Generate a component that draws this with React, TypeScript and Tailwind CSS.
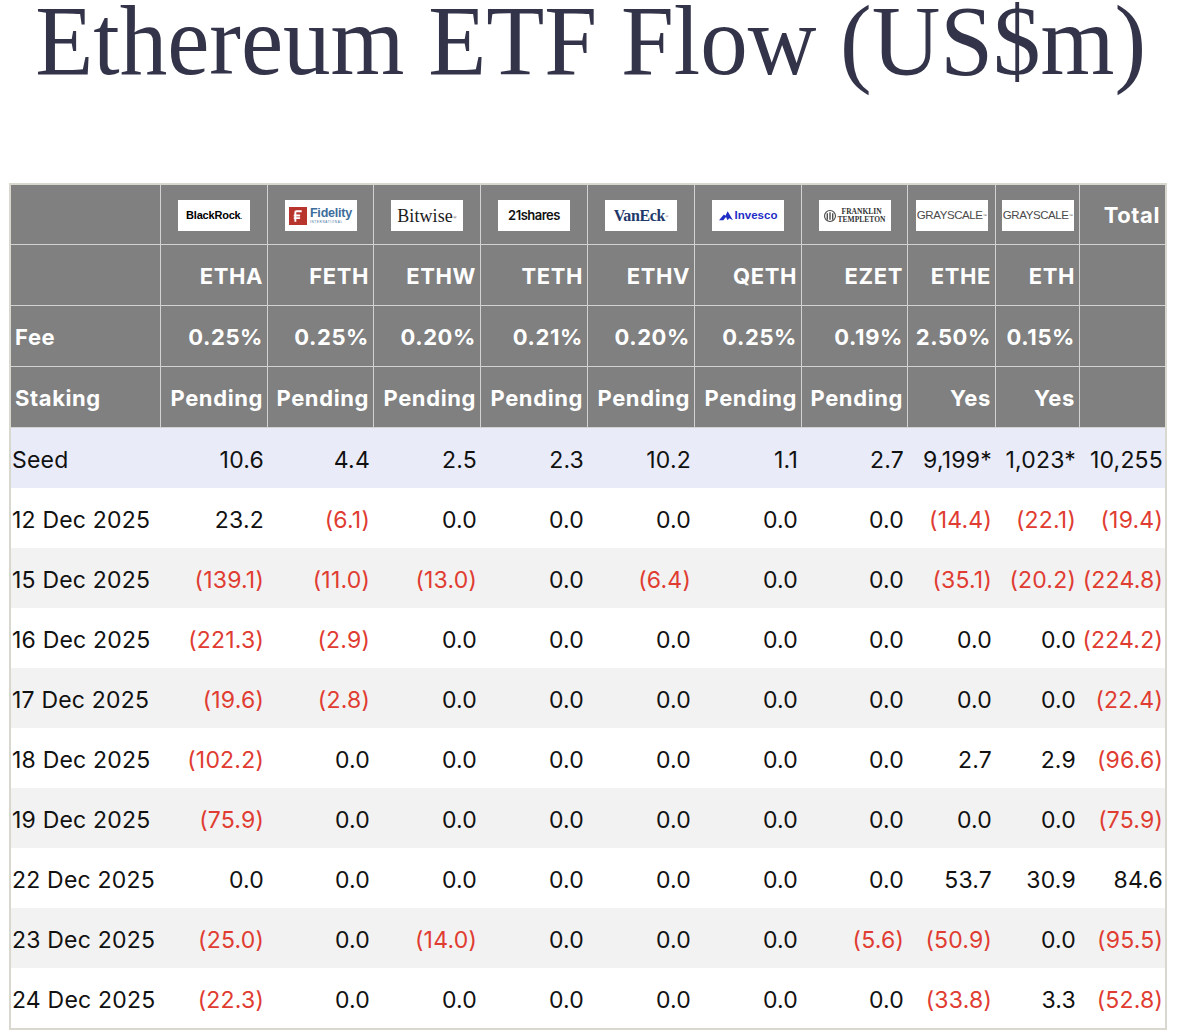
import React from 'react';

const COLS = [150, 107, 106, 107, 107, 107, 107, 106, 88, 84, 85];

const tickers = ['ETHA', 'FETH', 'ETHW', 'TETH', 'ETHV', 'QETH', 'EZET', 'ETHE', 'ETH'];
const fees = ['0.25%', '0.25%', '0.20%', '0.21%', '0.20%', '0.25%', '0.19%', '2.50%', '0.15%'];
const staking = ['Pending', 'Pending', 'Pending', 'Pending', 'Pending', 'Pending', 'Pending', 'Yes', 'Yes'];

const rows: { label: string; values: string[] }[] = [
  { label: 'Seed', values: ['10.6', '4.4', '2.5', '2.3', '10.2', '1.1', '2.7', '9,199*', '1,023*', '10,255'] },
  { label: '12 Dec 2025', values: ['23.2', '(6.1)', '0.0', '0.0', '0.0', '0.0', '0.0', '(14.4)', '(22.1)', '(19.4)'] },
  { label: '15 Dec 2025', values: ['(139.1)', '(11.0)', '(13.0)', '0.0', '(6.4)', '0.0', '0.0', '(35.1)', '(20.2)', '(224.8)'] },
  { label: '16 Dec 2025', values: ['(221.3)', '(2.9)', '0.0', '0.0', '0.0', '0.0', '0.0', '0.0', '0.0', '(224.2)'] },
  { label: '17 Dec 2025', values: ['(19.6)', '(2.8)', '0.0', '0.0', '0.0', '0.0', '0.0', '0.0', '0.0', '(22.4)'] },
  { label: '18 Dec 2025', values: ['(102.2)', '0.0', '0.0', '0.0', '0.0', '0.0', '0.0', '2.7', '2.9', '(96.6)'] },
  { label: '19 Dec 2025', values: ['(75.9)', '0.0', '0.0', '0.0', '0.0', '0.0', '0.0', '0.0', '0.0', '(75.9)'] },
  { label: '22 Dec 2025', values: ['0.0', '0.0', '0.0', '0.0', '0.0', '0.0', '0.0', '53.7', '30.9', '84.6'] },
  { label: '23 Dec 2025', values: ['(25.0)', '0.0', '(14.0)', '0.0', '0.0', '0.0', '(5.6)', '(50.9)', '0.0', '(95.5)'] },
  { label: '24 Dec 2025', values: ['(22.3)', '0.0', '0.0', '0.0', '0.0', '0.0', '0.0', '(33.8)', '3.3', '(52.8)'] },
];

function LogoBox({ children }: { children: React.ReactNode }) {
  return (
    <div className="w-[72px] h-[31px] bg-white flex items-center justify-center overflow-hidden font-normal tracking-normal leading-none">
      {children}
    </div>
  );
}

function BlackRockLogo() {
  return (
    <LogoBox>
      <span className="text-[11px] font-bold tracking-[-0.2px] text-black font-['Liberation_Sans',sans-serif]">
        BlackRock<span className="text-[6px]">.</span>
      </span>
    </LogoBox>
  );
}

function FidelityLogo() {
  return (
    <LogoBox>
      <div className="flex items-center gap-[3px]">
        <svg width="18" height="18" viewBox="0 0 17 17">
          <rect width="17" height="17" fill="#b8352d" />
          <path d="M6 4h6M6 4v10M4.5 8h6M4.5 10.5h6" stroke="#fff" strokeWidth="1.8" fill="none" />
        </svg>
        <div className="flex flex-col leading-none">
          <span className="text-[12.5px] font-bold text-[#3d6d9c] font-['Liberation_Sans',sans-serif] tracking-[-0.2px]">Fidelity</span>
          <span className="text-[3px] text-[#3d6d9c] tracking-[0.7px] mt-[2px] font-['Liberation_Sans',sans-serif]">INTERNATIONAL</span>
        </div>
      </div>
    </LogoBox>
  );
}

function BitwiseLogo() {
  return (
    <LogoBox>
      <span className="text-[18px] text-[#1b1b1b] font-['Liberation_Serif',serif] tracking-[0.1px]">
        Bitwise<sup className="text-[5px]">®</sup>
      </span>
    </LogoBox>
  );
}

function SharesLogo() {
  return (
    <LogoBox>
      <span className="text-[13px] font-semibold text-[#111] font-['Inter',sans-serif] tracking-[-0.5px]">21shares</span>
    </LogoBox>
  );
}

function VanEckLogo() {
  return (
    <LogoBox>
      <span className="text-[16px] font-bold text-[#22386a] font-['Liberation_Serif',serif] tracking-[-0.4px]">
        VanEck<sup className="text-[5px] text-[#888]">®</sup>
      </span>
    </LogoBox>
  );
}

function InvescoLogo() {
  return (
    <LogoBox>
      <div className="flex items-center gap-[2px]">
        <svg width="14" height="11" viewBox="0 0 13 10">
          <path d="M0 9.5 L4.5 4 L6 5.2 L8 1 L13 9.5 L9.5 7.5 L8 9.5 L6.5 6.5 L4 9.5 Z" fill="#1f2fc6" />
        </svg>
        <span className="text-[11.5px] font-bold text-[#1f2fc6] font-['Liberation_Sans',sans-serif]">Invesco</span>
      </div>
    </LogoBox>
  );
}

function FranklinLogo() {
  return (
    <LogoBox>
      <div className="flex items-center gap-[2px]">
        <svg width="12" height="12" viewBox="0 0 11 11">
          <circle cx="5.5" cy="5.5" r="5" fill="none" stroke="#444" strokeWidth="1" />
          <path d="M3 3v6M5.5 2v7M8 3v6" stroke="#444" strokeWidth="1.2" />
        </svg>
        <div className="flex flex-col leading-[8px] font-['Liberation_Serif',serif] text-[7.5px] font-bold text-[#333]">
          <span className="pl-[4px]">FRANKLIN</span>
          <span>TEMPLETON</span>
        </div>
      </div>
    </LogoBox>
  );
}

function GrayscaleLogo() {
  return (
    <LogoBox>
      <span className="text-[11.5px] text-[#4a4a4a] font-['Liberation_Sans',sans-serif] tracking-[-0.4px]">
        GRAYSCALE<sup className="text-[4px]">™</sup>
      </span>
    </LogoBox>
  );
}

const logos = [
  <BlackRockLogo key="br" />,
  <FidelityLogo key="fi" />,
  <BitwiseLogo key="bw" />,
  <SharesLogo key="21" />,
  <VanEckLogo key="ve" />,
  <InvescoLogo key="iv" />,
  <FranklinLogo key="ft" />,
  <GrayscaleLogo key="g1" />,
  <GrayscaleLogo key="g2" />,
];

function HeaderRow({ cells, first, height }: { cells: React.ReactNode[]; first?: React.ReactNode; height: string }) {
  return (
    <div className={`flex ${height} border-b border-[#d2d2d2]`}>
      {COLS.map((w, i) => (
        <div
          key={i}
          style={{ width: w }}
          className={`shrink-0 flex items-center px-1 pt-[3px] ${i < COLS.length - 1 ? 'border-r border-[#d2d2d2]' : ''} ${
            i === 0 ? 'justify-start' : 'justify-end'
          }`}
        >
          {i === 0 ? first : cells[i - 1]}
        </div>
      ))}
    </div>
  );
}

export default function App() {
  return (
    <div className="w-[1182px] bg-white font-['Inter',sans-serif]">
      <div className="h-[82px] flex justify-center">
        <h1 className="whitespace-nowrap text-[100px] leading-[82px] text-[#33344a] font-['Liberation_Serif',serif] scale-x-95">
          Ethereum ETF Flow (US$m)
        </h1>
      </div>

      <div className="mt-[101px] ml-[9px] w-[1158px] border-2 border-[#d8d8ce]">
        <div className="bg-[#808080] text-white text-[22px] font-bold tracking-[0.6px]">
          {/* logos row */}
          <div className="flex h-[60px] border-b border-[#d2d2d2]">
            {COLS.map((w, i) => (
              <div
                key={i}
                style={{ width: w }}
                className={`shrink-0 flex items-center pt-[2px] ${i < COLS.length - 1 ? 'border-r border-[#d2d2d2]' : ''} ${
                  i === 10 ? 'justify-end pl-1 pr-[5px]' : 'justify-center'
                }`}
              >
                {i === 0 ? null : i === 10 ? 'Total' : logos[i - 1]}
              </div>
            ))}
          </div>
          <HeaderRow height="h-[61px]" cells={[...tickers, '']} />
          <HeaderRow height="h-[61px]" first="Fee" cells={[...fees, '']} />
          <HeaderRow height="h-[61px]" first="Staking" cells={[...staking, '']} />
        </div>

        {rows.map((r, ri) => (
          <div
            key={r.label}
            className={`flex h-[60px] text-[23px] tracking-[0.2px] text-[#111] ${
              ri === 0 ? 'bg-[#e9ecf8]' : ri % 2 === 0 ? 'bg-[#f2f2f2]' : 'bg-white'
            }`}
          >
            {COLS.map((w, i) => {
              const v = i === 0 ? r.label : r.values[i - 1];
              const neg = v.startsWith('(');
              return (
                <div
                  key={i}
                  style={{ width: w }}
                  className={`shrink-0 flex items-center whitespace-nowrap pt-[4px] ${
                    i === 0 ? 'justify-start pl-[1px]' : i === 10 ? 'justify-end pr-[2px]' : 'justify-end pr-1'
                  } ${neg ? 'text-[#e03c31]' : ''}`}
                >
                  {v}
                </div>
              );
            })}
          </div>
        ))}
      </div>
    </div>
  );
}
